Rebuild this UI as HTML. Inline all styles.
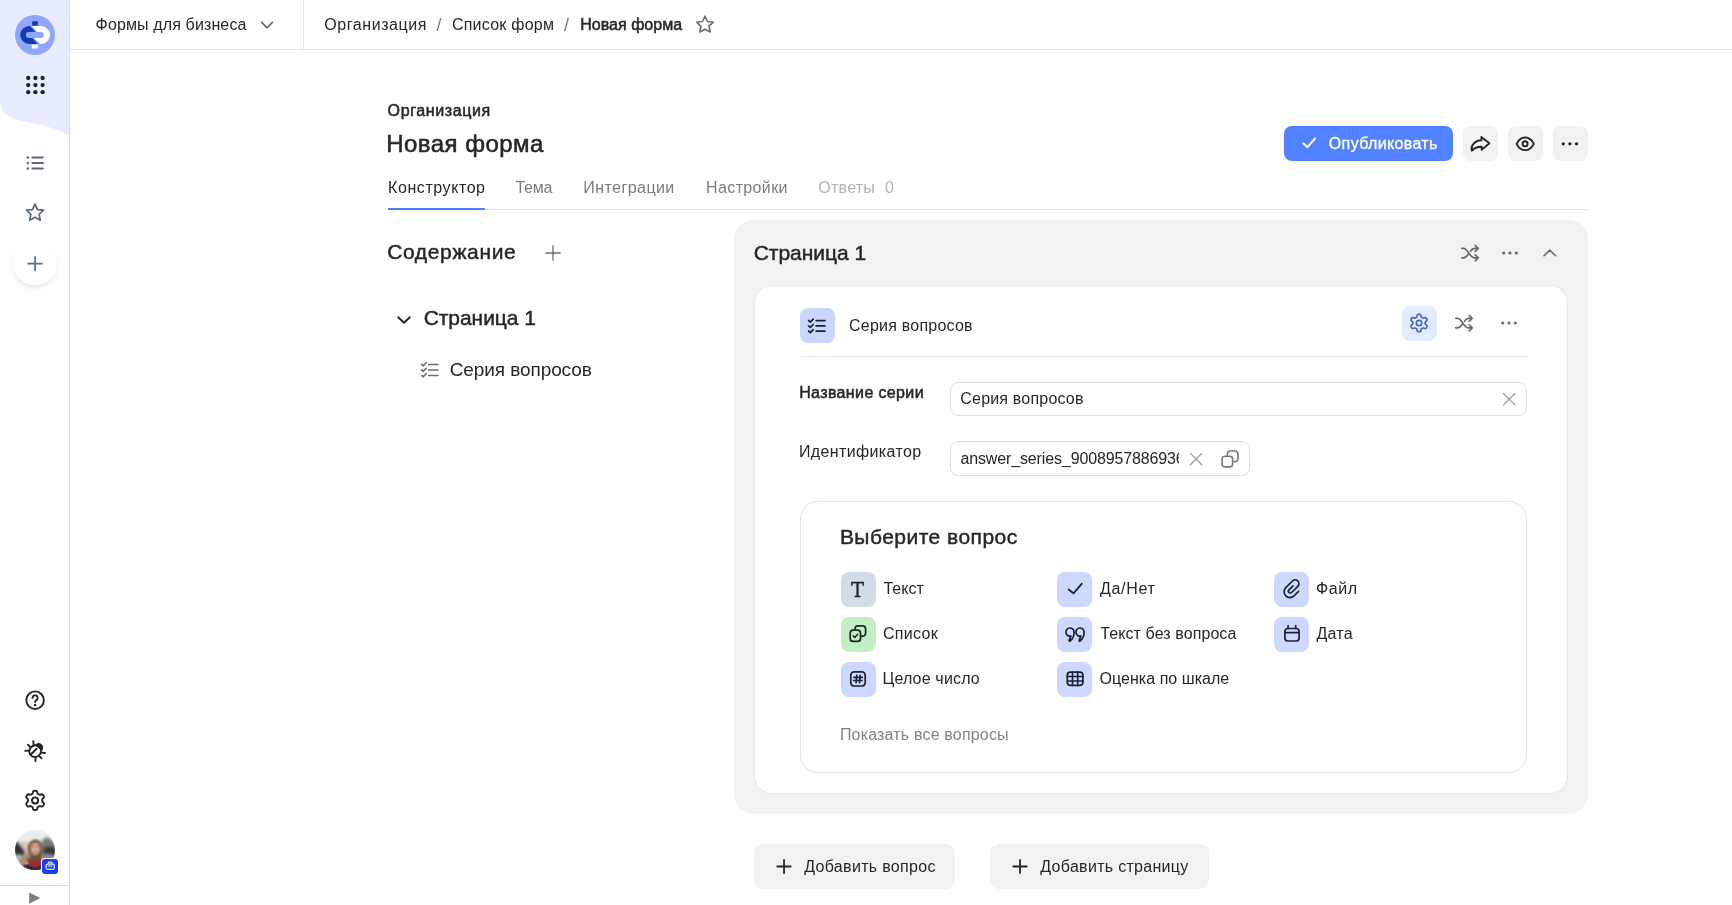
<!DOCTYPE html>
<html lang="ru">
<head>
<meta charset="utf-8">
<title>Новая форма — Формы для бизнеса</title>
<style>
*{box-sizing:border-box;margin:0;padding:0}
html,body{width:1732px;height:905px;overflow:hidden;background:#fff}
body{position:relative;font-family:"Liberation Sans",sans-serif;color:#262626;-webkit-font-smoothing:antialiased}
.a{position:absolute}
.t{position:absolute;white-space:nowrap;line-height:1;font-size:16px}
.m{-webkit-text-stroke:.35px currentColor}
svg{position:absolute;overflow:visible;display:block}
.ib{position:absolute;width:35px;height:35px;border-radius:8px;background:#f2f2f2}
.tile{position:absolute;width:35px;height:35px;border-radius:8px;background:#ccd8fd}
.inp{position:absolute;border:1px solid #e0e0e0;border-radius:8px;background:#fff}
</style>
</head>
<body>

<!-- ===== sidebar ===== -->
<div class="a" id="sidebar" style="left:0;top:0;width:70px;height:905px;background:#fff;border-right:1px solid #dcdcde"></div>
<svg id="wave" style="left:0;top:0" width="69" height="140" viewBox="0 0 69 140"><path d="M0 0H69V136.100C58 128.500 42 124.600 25 121.700C9 119 2.300 114 0 103.500Z" fill="#e8ecff"/></svg>
<svg id="sb" style="left:0;top:0" width="70" height="905" viewBox="0 0 70 905">
<defs>
<clipPath id="pill"><path clip-rule="evenodd" d="M29.1 26.1H41.1A8.9 8.9 0 0 1 41.1 43.9H29.1A8.900 8.900 0 0 1 29.100 26.100ZM28.900 31.900A3 3 0 0 0 28.900 37.900H40.900A3 3 0 0 0 40.900 31.900Z"/></clipPath>
<clipPath id="avc"><circle cx="35" cy="850" r="20"/></clipPath>
<filter id="bl1" x="-50%" y="-50%" width="200%" height="200%"><feGaussianBlur stdDeviation="1.6"/></filter>
<filter id="bl2" x="-50%" y="-50%" width="200%" height="200%"><feGaussianBlur stdDeviation="0.9"/></filter>
<filter id="sh" x="-60%" y="-60%" width="220%" height="220%"><feGaussianBlur stdDeviation="3.2"/></filter>
</defs>
<!-- logo -->
<circle cx="35" cy="35" r="20" fill="#8fa7fa"/>
<g clip-path="url(#pill)">
<polygon points="18,22 26.400,22 35.500,31.900 35.500,35 29.600,35 39.800,46 18,46" fill="#163cb0"/>
<polygon points="52,22 28.200,22 37.300,31.900 37.300,35 31,35 42,46 52,46" fill="#fff"/>
</g>
<rect x="32.100" y="21.200" width="5.800" height="4.500" rx="1" fill="#163cb0"/>
<rect x="31.800" y="44.500" width="6.200" height="4.100" rx="1" fill="#fff"/>
<!-- apps grid -->
<g fill="#1f2226">
<circle cx="28.200" cy="78.000" r="2.150"/><circle cx="35.400" cy="78.000" r="2.150"/><circle cx="42.600" cy="78.000" r="2.150"/>
<circle cx="28.200" cy="85.100" r="2.150"/><circle cx="35.400" cy="85.100" r="2.150"/><circle cx="42.600" cy="85.100" r="2.150"/>
<circle cx="28.200" cy="92.200" r="2.150"/><circle cx="35.400" cy="92.200" r="2.150"/><circle cx="42.600" cy="92.200" r="2.150"/>
</g>
<!-- list -->
<g stroke="#586a7e" stroke-width="1.800" stroke-linecap="round" fill="none">
<path d="M32.300 157.500H43M32.300 163H43M32.300 168.500H43"/>
</g>
<g fill="#586a7e"><circle cx="27.800" cy="157.500" r="1.300"/><circle cx="27.800" cy="163" r="1.300"/><circle cx="27.800" cy="168.500" r="1.300"/></g>
<!-- star -->
<path id="star" transform="translate(35 212.400) scale(.95) translate(-35 -212.400)" d="M35 203.600L37.700 209.400L44 210.100L39.300 214.400L40.600 220.700L35 217.500L29.400 220.700L30.700 214.400L26 210.100L32.300 209.400Z" fill="none" stroke="#586a7e" stroke-width="1.800" stroke-linejoin="round"/>
<!-- plus fab -->
<circle cx="35" cy="266" r="20" fill="#000" opacity=".16" filter="url(#sh)"/>
<circle cx="35" cy="263.500" r="22" fill="#fff"/>
<path d="M35.050 256.800V270.600M28.200 263.700H41.900" stroke="#586a7e" stroke-width="1.700" stroke-linecap="round" fill="none"/>
<!-- help -->
<circle cx="35.100" cy="700.200" r="8.800" fill="none" stroke="#222428" stroke-width="1.900"/>
<path d="M32.500 697.900A2.600 2.600 0 1 1 36.500 700.100C35.600 700.700 35.100 701.100 35.100 702.100" fill="none" stroke="#222428" stroke-width="1.900" stroke-linecap="round"/>
<circle cx="35.100" cy="704.900" r="1.250" fill="#222428"/>
<!-- bug -->
<g transform="translate(35.200 751.100) rotate(45)" stroke="#222428" stroke-width="1.900" stroke-linecap="round" fill="none">
<ellipse cx="0" cy="0" rx="5.700" ry="6.100"/>
<path d="M-0.700 -2.600V4.800"/>
<path d="M-5.400 -3.200L-8.300 -5.600M-6.200 0.600H-9.600M-5 4.300L-7.200 6.800M5.400 -3.200L8.300 -5.600M6.200 0.600H9.600M5 4.300L7.200 6.800"/>
<path d="M-3.600 -5.400A3.700 3.700 0 0 1 3.600 -5.400Z" fill="#222428" stroke-linejoin="round"/>
</g>
<!-- gear -->
<g transform="translate(35.100 800.400)" fill="none" stroke="#222428" stroke-width="1.900" stroke-linejoin="round">
<path d="M7.15 -0.00 7.15 -0.31 7.15 -0.63 7.17 -0.94 7.26 -1.28 7.56 -1.68 8.11 -2.17 8.64 -2.72 8.86 -3.22 8.84 -3.66 8.72 -4.07 8.56 -4.45 8.36 -4.82 8.13 -5.18 7.88 -5.52 7.59 -5.83 7.22 -6.06 6.68 -6.12 5.94 -5.94 5.23 -5.71 4.74 -5.65 4.40 -5.73 4.12 -5.88 3.84 -6.03 3.58 -6.19 3.30 -6.35 3.03 -6.50 2.77 -6.68 2.52 -6.93 2.33 -7.38 2.17 -8.11 1.96 -8.84 1.64 -9.28 1.25 -9.49 0.84 -9.59 0.42 -9.64 0.00 -9.65 -0.42 -9.64 -0.84 -9.59 -1.25 -9.49 -1.64 -9.28 -1.96 -8.84 -2.17 -8.11 -2.33 -7.38 -2.52 -6.93 -2.77 -6.68 -3.03 -6.50 -3.30 -6.35 -3.57 -6.19 -3.84 -6.03 -4.12 -5.88 -4.40 -5.73 -4.74 -5.65 -5.23 -5.71 -5.94 -5.94 -6.68 -6.12 -7.22 -6.06 -7.59 -5.83 -7.88 -5.52 -8.13 -5.18 -8.36 -4.83 -8.56 -4.45 -8.72 -4.07 -8.84 -3.66 -8.86 -3.22 -8.64 -2.72 -8.11 -2.17 -7.56 -1.68 -7.26 -1.28 -7.17 -0.94 -7.15 -0.63 -7.15 -0.31 -7.15 -0.00 -7.15 0.31 -7.15 0.63 -7.17 0.94 -7.26 1.28 -7.56 1.68 -8.11 2.17 -8.64 2.72 -8.86 3.22 -8.84 3.66 -8.72 4.07 -8.56 4.45 -8.36 4.83 -8.13 5.18 -7.88 5.52 -7.59 5.83 -7.22 6.06 -6.68 6.12 -5.94 5.94 -5.23 5.71 -4.74 5.65 -4.40 5.73 -4.12 5.88 -3.84 6.03 -3.58 6.19 -3.30 6.35 -3.03 6.50 -2.77 6.68 -2.52 6.93 -2.33 7.38 -2.17 8.11 -1.96 8.84 -1.64 9.28 -1.25 9.49 -0.84 9.59 -0.42 9.64 -0.00 9.65 0.42 9.64 0.84 9.59 1.25 9.49 1.64 9.28 1.96 8.84 2.17 8.11 2.33 7.38 2.52 6.93 2.77 6.68 3.03 6.50 3.30 6.35 3.57 6.19 3.84 6.03 4.12 5.88 4.40 5.73 4.74 5.65 5.23 5.71 5.94 5.94 6.68 6.12 7.22 6.06 7.59 5.83 7.88 5.52 8.13 5.18 8.36 4.82 8.56 4.45 8.72 4.07 8.84 3.66 8.86 3.22 8.64 2.72 8.11 2.17 7.56 1.68 7.26 1.28 7.17 0.94 7.15 0.63 7.15 0.31Z"/><circle r="3.050"/>
</g>
<!-- avatar -->
<g clip-path="url(#avc)">
<rect x="14" y="829" width="42" height="42" fill="#eeeeef"/>
<g filter="url(#bl1)">
<path d="M13 846C18 842 24 840 30 842L30 858H13Z" fill="#d7c6c6"/>
<path d="M13 845L17 841L21 846L25 851L25 860H13Z" fill="#2d3035"/>
<path d="M41 843C43 838 47 836 50 839C53 841 56 844 57 848V862H41Z" fill="#747a76"/>
<path d="M43.500 848C47 845 52 846 57 849V858H43.500Z" fill="#363b38"/>
<path d="M13 856C18 854 22 855 26 858V874H13Z" fill="#b9b9b9"/>
<path d="M41 856C46 853 52 854 57 857V874H41Z" fill="#8e8f8c"/>
<rect x="13" y="864" width="44" height="10" fill="#262b29"/>
</g>
<g filter="url(#bl2)">
<path d="M28 852C27 845 30 839.500 35.500 839.500C41 839.500 43.500 845 42.500 852C42 858 41 862 39 866H30C27 862 28 857 28 852Z" fill="#6a5139"/>
<path d="M28.500 850C26 854 23 857 19 859L21 866C25 864 28 861 30.500 857Z" fill="#a88e70"/>
<ellipse cx="35.300" cy="848.400" rx="4.600" ry="6.400" fill="#dba594"/>
<path d="M32.200 846.300H34.200M36.600 846.300H38.600" stroke="#7a4c40" stroke-width="1.100" stroke-linecap="round" fill="none"/>
<path d="M33.300 851.700C34.600 852.600 36.200 852.600 37.500 851.700" stroke="#a8554f" stroke-width="1" stroke-linecap="round" fill="none"/>
<path d="M31.500 842.500C33 840.500 37.500 840.500 39.200 842.500C38 843 33 843.400 31.500 842.500Z" fill="#6a5139"/>
<path d="M27.500 857C30 860 32.500 861.500 34.500 861.500C37.500 861.500 40 859.500 41.500 856.500L42 864C40 866.500 37 867.500 34 867C31 866.500 28.500 864.500 27 862Z" fill="#9b2e36"/>
<path d="M22 866C28 864 30 867 35 867.500C40 867.500 43 865 47 866V874H22Z" fill="#272c2a"/>
</g>
</g>
<!-- badge -->
<rect x="41" y="858" width="18" height="17" rx="3.800" fill="#fff"/>
<rect x="42" y="859" width="16" height="15" rx="3" fill="#1a3ef2"/>
<g fill="none" stroke="#dbe6ff" stroke-width="1.200" stroke-linejoin="round">
<rect x="46.100" y="864.100" width="8.200" height="5.300" rx="1.500"/>
<path d="M48.500 864.100V862.200H51.900V864.100"/>
<path d="M47.800 866H52.600" stroke-width="1"/>
</g>
<!-- bottom -->
<rect x="0" y="885" width="69" height="1" fill="#dedede"/>
<path d="M29.200 892.400L40.400 898L29.200 903.800Z" fill="#7d7d7d"/>
</svg>


<!-- ===== header ===== -->
<div class="a" style="left:70px;top:49px;width:1662px;height:1px;background:#e4e4e4"></div>
<div class="a" style="left:303px;top:0;width:1px;height:49px;background:#e4e4e4"></div>
<svg style="left:255px;top:13px" width="24" height="24" viewBox="0 0 24 24"><path d="M6.600 9.400L12 14.800L17.400 9.400" fill="none" stroke="#5c5c5c" stroke-width="1.500" stroke-linecap="round" stroke-linejoin="round"/></svg>
<svg style="left:693px;top:12.200px" width="24" height="24" viewBox="0 0 24 24"><path transform="translate(12 12) scale(.93) translate(-12 -12)" d="M12 3.600L14.700 9.300L21 10.100L16.400 14.400L17.600 20.600L12 17.600L6.400 20.600L7.600 14.400L3 10.100L9.300 9.300Z" fill="none" stroke="#6e6e6e" stroke-width="1.800" stroke-linejoin="round"/></svg>


<!-- ===== title / tabs ===== -->
<div class="a" style="left:387px;top:209px;width:1201px;height:1px;background:#e4e4e4"></div>
<div class="a" style="left:388px;top:208px;width:97px;height:2px;background:#4f7df3"></div>
<div class="a" style="left:1284px;top:126px;width:169px;height:35px;border-radius:8px;background:#5282ff"></div>
<div class="ib" style="left:1463px;top:126px"></div>
<div class="ib" style="left:1508px;top:126px"></div>
<div class="ib" style="left:1553px;top:126px"></div>
<svg id="tpi" style="left:0;top:0" width="1732" height="905" viewBox="0 0 1732 905" fill="none" stroke="#222428" stroke-width="1.900" stroke-linecap="round" stroke-linejoin="round">
<path d="M1303.300 143.200L1307.500 147.200L1315.100 138.400" stroke="#fff" stroke-width="2"/>
<path d="M1481.400 136.900L1489.300 143.200L1481.700 149.900V146.800C1477.500 146.600 1474.300 147.900 1471.900 150.700C1470.400 146 1474.400 140.500 1481.400 140.200Z"/>
<path d="M1516.600 143.800C1518.600 139.600 1521.600 137.500 1525.200 137.500S1531.800 139.600 1533.800 143.800C1531.800 148 1528.800 150.100 1525.200 150.100S1518.600 148 1516.600 143.800Z"/>
<circle cx="1525.100" cy="143.850" r="2.550"/>
<g fill="#222428" stroke="none"><circle cx="1563.300" cy="143.850" r="1.650"/><circle cx="1569.900" cy="143.850" r="1.650"/><circle cx="1576.500" cy="143.850" r="1.650"/></g>
</svg>


<!-- ===== left tree ===== -->
<svg style="left:541px;top:241px" width="24" height="24" viewBox="0 0 24 24"><path d="M12 4.800V19.200M4.800 12H19.200" fill="none" stroke="#6b6b6b" stroke-width="1.300" stroke-linecap="round"/></svg>
<svg style="left:391.700px;top:307.900px" width="24" height="24" viewBox="0 0 24 24"><path d="M6.200 9.200L12 14.800L17.800 9.200" fill="none" stroke="#222428" stroke-width="1.900" stroke-linecap="round" stroke-linejoin="round"/></svg>
<svg style="left:418px;top:358px" width="24" height="24" viewBox="0 0 24 24" fill="none" stroke="#6b6b6b" stroke-width="1.600" stroke-linecap="round" stroke-linejoin="round"><path d="M10.600 6.500H20M10.600 12H20M10.600 17.500H20"/><path d="M3.700 6.300L5.300 7.800L8.200 4.700M3.700 11.800L5.300 13.300L8.200 10.200M3.700 17.300L5.300 18.800L8.200 15.700"/></svg>


<!-- ===== page panel ===== -->
<div class="a" style="left:734px;top:220px;width:854px;height:594px;border-radius:20px;background:#f2f2f2"></div>
<div class="a" style="left:754px;top:285px;width:814px;height:509px;border-radius:18px;background:#fff;border:1px solid #e6e6e6"></div>
<div class="tile" style="left:800px;top:308px;background:#c9d6fd"></div>
<div class="tile" style="left:1402px;top:306px;background:#e4eaff"></div>
<div class="a" style="left:800px;top:356px;width:727px;height:1px;background:#e4e4e4"></div>
<div class="inp" style="left:950px;top:382px;width:577px;height:34px"></div>
<div class="inp" style="left:950px;top:441px;width:300px;height:35px"></div>
<div class="a" style="left:800px;top:501px;width:727px;height:272px;border-radius:18px;border:1px solid #e4e4e4;background:#fff"></div>
<svg id="ic" style="left:0;top:0" width="1732" height="905" viewBox="0 0 1732 905" fill="none" stroke-linecap="round" stroke-linejoin="round">
<!-- page header: shuffle, dots, chevron-up -->
<g id="shuf" stroke="#6b6b6b" stroke-width="1.650">
<path d="M1461.700 248.400H1463.500C1467.800 248.400 1469.700 257.800 1474.300 257.800H1478M1461.700 257.800H1463.500C1465.700 257.800 1467.200 255.800 1468.300 254.200M1470.400 251.400C1471.400 249.800 1472.600 248.400 1474.300 248.400H1478M1475.200 245.400L1478.300 248.400L1475.200 251.400M1475.200 254.800L1478.300 257.800L1475.200 260.800"/>
</g>
<g fill="#6b6b6b" stroke="none"><circle cx="1503.700" cy="253" r="1.600"/><circle cx="1510" cy="253" r="1.600"/><circle cx="1516.300" cy="253" r="1.600"/></g>
<path d="M1544 255.800L1549.800 250L1555.600 255.800" stroke="#6b6b6b" stroke-width="1.600"/>
<!-- question header: list-check, gear, shuffle, dots -->
<g stroke="#1c2233" stroke-width="1.700">
<path d="M816.200 320.600H825M816.200 325.900H825M816.200 331.100H825"/>
<path d="M808.600 320.500L810.400 322.100L813.200 319.200M808.600 325.800L810.400 327.400L813.200 324.500M808.600 331L810.400 332.600L813.200 329.700"/>
</g>
<g transform="translate(1419 323)" stroke="#4262c9" stroke-width="1.650"><path d="M6.25 -0.00 6.25 -0.27 6.25 -0.55 6.27 -0.83 6.38 -1.12 6.68 -1.48 7.24 -1.94 7.78 -2.45 8.01 -2.92 8.01 -3.32 7.91 -3.69 7.76 -4.04 7.58 -4.37 7.38 -4.70 7.15 -5.00 6.88 -5.28 6.53 -5.48 6.02 -5.51 5.30 -5.30 4.62 -5.04 4.16 -4.96 3.85 -5.02 3.60 -5.14 3.36 -5.28 3.13 -5.41 2.89 -5.55 2.65 -5.69 2.42 -5.85 2.21 -6.08 2.06 -6.52 1.94 -7.24 1.77 -7.97 1.48 -8.40 1.13 -8.60 0.76 -8.69 0.38 -8.74 0.00 -8.75 -0.38 -8.74 -0.76 -8.69 -1.13 -8.60 -1.48 -8.40 -1.77 -7.97 -1.94 -7.24 -2.06 -6.52 -2.21 -6.08 -2.42 -5.85 -2.65 -5.69 -2.89 -5.55 -3.12 -5.41 -3.36 -5.28 -3.60 -5.14 -3.85 -5.02 -4.16 -4.96 -4.62 -5.04 -5.30 -5.30 -6.02 -5.51 -6.53 -5.48 -6.88 -5.28 -7.15 -5.00 -7.38 -4.70 -7.58 -4.38 -7.76 -4.04 -7.91 -3.69 -8.01 -3.32 -8.01 -2.92 -7.78 -2.45 -7.24 -1.94 -6.68 -1.48 -6.38 -1.12 -6.27 -0.83 -6.25 -0.55 -6.25 -0.27 -6.25 -0.00 -6.25 0.27 -6.25 0.55 -6.27 0.83 -6.38 1.12 -6.68 1.48 -7.24 1.94 -7.78 2.45 -8.01 2.92 -8.01 3.32 -7.91 3.69 -7.76 4.04 -7.58 4.38 -7.38 4.70 -7.15 5.00 -6.88 5.28 -6.53 5.48 -6.02 5.51 -5.30 5.30 -4.62 5.04 -4.16 4.96 -3.85 5.02 -3.60 5.14 -3.36 5.28 -3.13 5.41 -2.89 5.55 -2.65 5.69 -2.42 5.85 -2.21 6.08 -2.06 6.52 -1.94 7.24 -1.77 7.97 -1.48 8.40 -1.13 8.60 -0.76 8.69 -0.38 8.74 -0.00 8.75 0.38 8.74 0.76 8.69 1.13 8.60 1.48 8.40 1.77 7.97 1.94 7.24 2.06 6.52 2.21 6.08 2.42 5.85 2.65 5.69 2.89 5.55 3.12 5.41 3.36 5.28 3.60 5.14 3.85 5.02 4.16 4.96 4.62 5.04 5.30 5.30 6.02 5.51 6.53 5.48 6.88 5.28 7.15 5.00 7.38 4.70 7.58 4.37 7.76 4.04 7.91 3.69 8.01 3.32 8.01 2.92 7.78 2.45 7.24 1.94 6.68 1.48 6.38 1.12 6.27 0.83 6.25 0.55 6.25 0.27Z"/><circle r="2.700"/></g>
<use href="#shuf" transform="translate(-6 70)"/>
<g fill="#6b6b6b" stroke="none"><circle cx="1502.700" cy="323" r="1.600"/><circle cx="1509" cy="323" r="1.600"/><circle cx="1515.300" cy="323" r="1.600"/></g>
<!-- input clear / copy -->
<path d="M1503.500 393.500L1514.900 404.900M1514.900 393.500L1503.500 404.900" stroke="#9a9a9a" stroke-width="1.300"/>
<path d="M1190.400 453.400L1201.800 464.800M1201.800 453.400L1190.400 464.800" stroke="#9a9a9a" stroke-width="1.300"/>
<g stroke="#777" stroke-width="1.600">
<rect x="1222.100" y="456.300" width="10.500" height="10.600" rx="3"/>
<path d="M1227.400 455.300V454A3 3 0 0 1 1230.400 451H1234.900A3 3 0 0 1 1237.900 454V458.800A3 3 0 0 1 1234.900 461.800H1233.700"/>
</g>
</svg>


<!-- question tiles -->
<div class="tile" style="left:841px;top:572px;background:#d3dce6"></div>
<div class="tile" style="left:841px;top:617px;background:#c3edc3"></div>
<div class="tile" style="left:841px;top:662px"></div>
<div class="tile" style="left:1057px;top:572px"></div>
<div class="tile" style="left:1057px;top:617px"></div>
<div class="tile" style="left:1057px;top:662px"></div>
<div class="tile" style="left:1274px;top:572px"></div>
<div class="tile" style="left:1274px;top:617px"></div>
<span class="t" style="will-change:transform;left:850.400px;top:580.600px;width:15px;text-align:center;font-family:'DejaVu Serif','Liberation Serif',serif;font-size:19.500px;color:#1c2233;-webkit-text-stroke:.3px #1c2233">T</span>
<svg id="ti" style="left:0;top:0" width="1732" height="905" viewBox="0 0 1732 905" fill="none" stroke="#1c2233" stroke-width="1.700" stroke-linecap="round" stroke-linejoin="round">
<!-- list (two squares + check) -->
<g stroke="#1a2a1f">
<rect x="850.200" y="630.100" width="10.300" height="11.300" rx="3"/>
<path d="M855 629V628.900A3 3 0 0 1 858 625.900H862.600A3 3 0 0 1 865.600 628.900V633.200A3 3 0 0 1 862.600 636.200H861.700"/>
<path d="M853.200 635.900L854.800 637.400L857.600 634.200" stroke-width="1.500"/>
</g>
<!-- integer (#) -->
<rect x="850.800" y="671.800" width="14.400" height="14.200" rx="3.300"/>
<path d="M856.800 675.300L856.100 682.600M860.200 675.300L859.500 682.600M854 677.400H862.300M853.700 680.500H862" stroke-width="1.700"/>
<!-- yes/no check -->
<path d="M1068.700 589.500L1073.500 593.400L1081.700 583.800" stroke-width="1.800"/>
<!-- quotes -->
<path id="q9" d="M1074.10 632.10A4.1 4.1 0 1 0 1070.90 636.10L1069.10 640.40C1068.90 641.10 1069.70 641.40 1070.30 640.90C1072.60 639.10 1074.10 636.10 1074.10 632.10Z"/>
<use href="#q9" transform="translate(10 0)"/>
<!-- grid -->
<rect x="1067.300" y="672.100" width="15.600" height="13.300" rx="3.200"/>
<path d="M1072.500 672.100V685.400M1077.700 672.100V685.400M1067.300 676.500H1082.900M1067.300 681H1082.900" stroke-width="1.600"/>
<!-- paperclip -->
<g transform="translate(1291.800 589.200) rotate(45)">
<path d="M-1.500 -3.300V2.500A1.850 1.850 0 0 0 2.200 2.500V-6.300A3.750 3.750 0 0 0 -5.300 -6.300V3.200A5.800 5.800 0 0 0 6.300 3.200V-3.300"/>
</g>
<!-- calendar -->
<rect x="1284.900" y="628.500" width="14.200" height="12.500" rx="3"/>
<path d="M1284.900 632.600H1299.100M1288.100 625.700V628.500M1295.700 625.700V628.500"/>
</svg>


<!-- bottom buttons -->
<div class="a" style="left:754px;top:844px;width:201px;height:45px;border-radius:9px;background:#f2f2f2"></div>
<div class="a" style="left:990px;top:844px;width:219px;height:45px;border-radius:9px;background:#f2f2f2"></div>
<svg id="bi" style="left:0;top:0" width="1732" height="905" viewBox="0 0 1732 905" fill="none" stroke="#222428" stroke-width="1.800" stroke-linecap="round">
<path d="M784.050 860V873M777.300 866.500H790.700M1020.050 860V873M1013.300 866.500H1026.700"/>
</svg>


<!-- ===== texts ===== -->
<div id="texts" style="position:absolute;left:0;top:0;width:1732px;height:905px;will-change:transform">
<span class="t" style="left:95.6px;top:17px;letter-spacing:0.13px">Формы для бизнеса</span>
<span class="t" style="left:324.3px;top:17px;letter-spacing:0.57px">Организация</span>
<span class="t" style="left:436.6px;top:16px;font-size:18px;color:#777b85">/</span>
<span class="t" style="left:451.9px;top:17px;letter-spacing:0.24px">Список форм</span>
<span class="t" style="left:564.1px;top:16px;font-size:18px;color:#777b85">/</span>
<span class="t" style="left:580.2px;top:17px;letter-spacing:0.03px;-webkit-text-stroke:0.5px currentColor">Новая форма</span>
<span class="t" style="left:387.6px;top:103px;letter-spacing:0.61px;-webkit-text-stroke:0.5px currentColor">Организация</span>
<span class="t" style="left:386.2px;top:132px;font-size:24px;letter-spacing:0.47px;-webkit-text-stroke:0.55px currentColor">Новая форма</span>
<span class="t" style="left:388.1px;top:180px;letter-spacing:0.57px">Конструктор</span>
<span class="t" style="left:515.4px;top:180px;letter-spacing:-0.20px;color:#7c7c7c">Тема</span>
<span class="t" style="left:583.3px;top:180px;letter-spacing:0.44px;color:#7c7c7c">Интеграции</span>
<span class="t" style="left:706.1px;top:180px;letter-spacing:0.36px;color:#7c7c7c">Настройки</span>
<span class="t" style="left:818.3px;top:180px;letter-spacing:0.25px;color:#b3b3b3">Ответы</span>
<span class="t" style="left:885.0px;top:180px;color:#b3b3b3">0</span>
<span class="t" style="left:1328.8px;top:136px;letter-spacing:0.36px;color:#fff;-webkit-text-stroke:0.3px currentColor">Опубликовать</span>
<span class="t" style="left:387.2px;top:241px;font-size:21px;letter-spacing:0.64px;-webkit-text-stroke:0.45px currentColor">Содержание</span>
<span class="t" style="left:423.7px;top:307px;font-size:21px;letter-spacing:-0.06px;-webkit-text-stroke:0.45px currentColor">Страница 1</span>
<span class="t" style="left:449.7px;top:360px;font-size:19px;letter-spacing:-0.09px">Серия вопросов</span>
<span class="t" style="left:753.7px;top:242px;font-size:21px;letter-spacing:-0.03px;-webkit-text-stroke:0.45px currentColor">Страница 1</span>
<span class="t" style="left:849.0px;top:318px;letter-spacing:0.22px">Серия вопросов</span>
<span class="t" style="left:799.2px;top:385px;letter-spacing:0.37px;-webkit-text-stroke:0.5px currentColor">Название серии</span>
<span class="t" style="left:960.3px;top:391px;letter-spacing:0.19px">Серия вопросов</span>
<span class="t" style="left:799.0px;top:444px;letter-spacing:0.36px">Идентификатор</span>
<span class="t" style="left:839.9px;top:526px;font-size:21px;letter-spacing:0.47px;-webkit-text-stroke:0.45px currentColor">Выберите вопрос</span>
<span class="t" style="left:883.4px;top:581px;letter-spacing:0.04px">Текст</span>
<span class="t" style="left:882.9px;top:626px;letter-spacing:0.31px">Список</span>
<span class="t" style="left:882.4px;top:671px;letter-spacing:0.17px">Целое число</span>
<span class="t" style="left:1100.0px;top:581px;letter-spacing:0.69px">Да/Нет</span>
<span class="t" style="left:1100.3px;top:626px;letter-spacing:0.09px">Текст без вопроса</span>
<span class="t" style="left:1099.5px;top:671px;letter-spacing:0.04px">Оценка по шкале</span>
<span class="t" style="left:1315.9px;top:581px;letter-spacing:0.62px">Файл</span>
<span class="t" style="left:1316.4px;top:626px;letter-spacing:0.28px">Дата</span>
<span class="t" style="left:839.9px;top:727px;letter-spacing:0.18px;color:#828282">Показать все вопросы</span>
<span class="t" style="left:804.2px;top:859px;letter-spacing:0.32px">Добавить вопрос</span>
<span class="t" style="left:1040.3px;top:859px;letter-spacing:0.30px">Добавить страницу</span>
<div class="a" style="left:960.4px;top:448px;width:218.6px;height:24px;overflow:hidden"><span class="t" style="left:0;top:3px;letter-spacing:-0.13px">answer_series_9008957886936</span></div>
</div>
</body>
</html>
